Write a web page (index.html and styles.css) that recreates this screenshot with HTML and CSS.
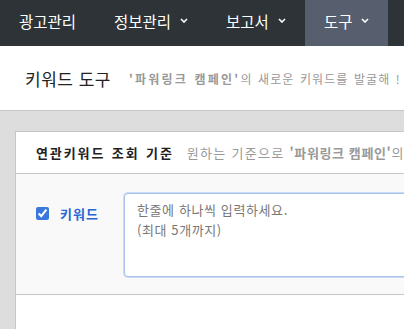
FILE: index.html
```html
<!DOCTYPE html>
<html lang="ko">
<head>
  <meta charset="UTF-8">
  <title>키워드 도구</title>
  <link rel="stylesheet" href="styles.css">
</head>
<body>
  <nav class="topnav">
    <a class="nav-item">광고관리</a>
    <a class="nav-item">정보관리 <svg class="caret" viewBox="0 0 8 5"><path d="M1 1l3 3 3-3" /></svg></a>
    <a class="nav-item">보고서 <svg class="caret" viewBox="0 0 8 5"><path d="M1 1l3 3 3-3" /></svg></a>
    <a class="nav-item active">도구 <svg class="caret" viewBox="0 0 8 5"><path d="M1 1l3 3 3-3" /></svg></a>
  </nav>

  <header class="page-header">
    <h1>키워드 도구</h1>
    <p class="page-desc"><b>'파워링크 캠페인'</b>의 새로운 키워드를 발굴해 !</p>
  </header>

  <main class="content">
    <section class="panel">
      <div class="panel-head">
        <h2>연관키워드 조회 기준</h2>
        <span class="panel-desc">원하는 기준으로 <b>'파워링크 캠페인'</b>의 연관키워드를 조회하세요.</span>
      </div>
      <div class="panel-body">
        <label class="field-label">
          <input type="checkbox" checked>
          <span>키워드</span>
        </label>
        <textarea class="keyword-input" autofocus placeholder="한줄에 하나씩 입력하세요.&#10;(최대 5개까지)"></textarea>
      </div>
      <div class="panel-foot"></div>
    </section>
  </main>
</body>
</html>
```

FILE: styles.css
```css
:root {
  --nav-bg: #2d3336;
  --nav-active: #575f6f;
  --page-bg: #dddddd;
  --line: #c6c6c6;
  --muted: #999;
  --blue: #2a66d4;
}

* {
  box-sizing: border-box;
}

body {
  margin: 0;
  font-family: "Noto Sans CJK KR", "Noto Sans", sans-serif;
  background-color: var(--page-bg);
  color: #222;
  overflow: hidden;
  height: 100vh;
}

/* top navigation */
.topnav {
  display: flex;
  height: 46px;
  background-color: var(--nav-bg);
  white-space: nowrap;
}

.nav-item {
  display: flex;
  flex-shrink: 0;
  align-items: center;
  gap: 9px;
  padding: 0 19px 5px;
  color: #fff;
  font-size: 15.5px;
  cursor: pointer;
}

.nav-item.active {
  background-color: var(--nav-active);
}

.caret {
  width: 8px;
  height: 5px;
  fill: none;
  stroke: #fff;
  stroke-width: 1.6;
}

/* page header */
.page-header {
  display: flex;
  align-items: center;
  gap: 18px;
  height: 65px;
  padding-left: 25px;
  background: #fff;
  border-bottom: 1px solid var(--line);
  white-space: nowrap;
}

.page-header h1 {
  margin: 0;
  font-size: 17px;
  font-weight: 400;
  letter-spacing: 0.5px;
}

.page-desc {
  margin: 0;
  font-size: 12px;
  color: var(--muted);
  letter-spacing: 1.1px;
  word-spacing: 1px;
}

.page-desc b {
  letter-spacing: 2.2px;
}

/* content */
.content {
  padding: 20px 0 0 15px;
}

.panel {
  background: #fff;
  border: 1px solid var(--line);
  border-right: none;
  white-space: nowrap;
}

.panel-head {
  display: flex;
  align-items: center;
  gap: 13px;
  height: 42px;
  padding-left: 20px;
  border-bottom: 1px solid var(--line);
}

.panel-head h2 {
  margin: 0;
  font-size: 13px;
  font-weight: 700;
  letter-spacing: 1.9px;
  word-spacing: 1px;
}

.panel-desc {
  font-size: 13px;
  color: var(--muted);
  letter-spacing: 1.3px;
}

.panel-desc b {
  letter-spacing: 0.6px;
}

.panel-body {
  display: flex;
  align-items: flex-start;
  padding: 19px 0 17px 20px;
  background: #f9f9f9;
  border-bottom: 1px solid var(--line);
}

.field-label {
  display: flex;
  flex-shrink: 0;
  align-items: center;
  gap: 11px;
  width: 88px;
  padding-top: 11px;
  color: var(--blue);
  font-size: 13px;
  font-weight: 700;
  letter-spacing: 1px;
}

.field-label input {
  margin: 0;
  width: 13px;
  height: 13px;
  accent-color: #3b78dc;
}

.keyword-input {
  flex: none;
  width: 330px;
  height: 84px;
  padding: 6px 12px;
  border: 1px solid #a9c4ec;
  border-radius: 4px;
  box-shadow: 0 0 0 1px #c9daf4;
  outline: none;
  resize: none;
  font-family: inherit;
  font-size: 13px;
  line-height: 19.5px;
  letter-spacing: 0.6px;
}

.keyword-input::placeholder {
  color: #777;
}

.panel-foot {
  height: 60px;
}
```
